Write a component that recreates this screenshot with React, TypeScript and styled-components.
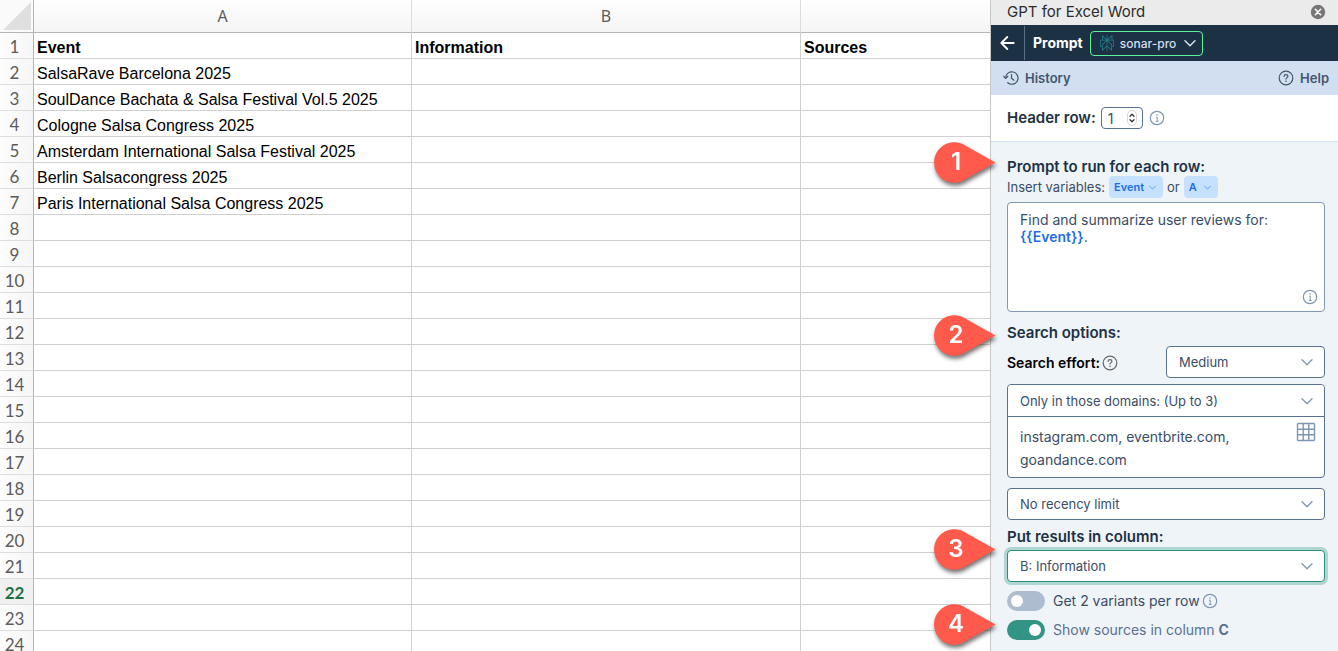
import React from 'react';
import styled, { createGlobalStyle } from 'styled-components';

const GlobalStyle = createGlobalStyle`
  * { box-sizing: border-box; }
  body { margin: 0; background: #fff; }
  button, input, select, textarea { font-family: inherit; margin: 0; }
`;

const ui = "Inter, 'Liberation Sans', sans-serif";

const Workspace = styled.div`
  display: grid;
  grid-template-columns: minmax(0, 1fr) 348px;
  height: 100vh;
  overflow: hidden;
`;

/* ---------- Spreadsheet ---------- */

const Sheet = styled.main`
  overflow: hidden;
  background: #fff;
`;

const Grid = styled.table`
  width: 100%;
  table-layout: fixed;
  border-collapse: separate;
  border-spacing: 0;
  font: 16px/20px 'Liberation Sans', Arial, sans-serif;
  color: #000;
`;

const Col = styled.col<{ $width?: number }>`
  width: ${(p) => (p.$width ? `${p.$width}px` : 'auto')};
`;

const ColumnHead = styled.th`
  height: 33px;
  padding: 0;
  border-right: 1px solid #dcdcdc;
  border-bottom: 1px solid #b5b5b5;
  background: linear-gradient(#fefefe, #f5f5f5);
  font: 400 16px/24px 'Noto Sans', sans-serif;
  color: #5c5c5c;
  &:last-child { border-right: 0; }
`;

const Corner = styled.td`
  height: 33px;
  padding: 0 2px 2px 0;
  border-right: 1px solid #b5b5b5;
  border-bottom: 1px solid #b5b5b5;
  background: #fafafa;
  vertical-align: bottom;
  text-align: right;
  svg { display: block; margin-left: auto; }
`;

const RowHead = styled.th<{ $active?: boolean }>`
  height: 26px;
  padding: 3px 4px 0 0;
  border-right: 1px solid #b5b5b5;
  border-bottom: 1px solid #dedede;
  background: ${(p) => (p.$active ? '#f0f0f0' : 'linear-gradient(90deg, #fdfdfd, #f6f6f6)')};
  font: ${(p) => (p.$active ? 700 : 400)} 17px/22px Lato, 'Noto Sans', sans-serif;
  color: ${(p) => (p.$active ? '#1e7145' : '#5c5c5c')};
  text-align: center;
`;

const Cell = styled.td<{ $bold?: boolean }>`
  height: 26px;
  padding: 5px 3px 0;
  border-right: 1px solid #d0d0d0;
  border-bottom: 1px solid #d0d0d0;
  font-weight: ${(p) => (p.$bold ? 700 : 400)};
  white-space: nowrap;
  &:last-child { border-right: 0; }
`;

/* ---------- Side panel ---------- */

const Panel = styled.aside`
  position: relative;
  display: flex;
  flex-direction: column;
  border-left: 1px solid #c8c8c8;
  background: #eff4f9;
  font: 14px/20px ${ui};
  color: #3a4d66;
`;

const TitleBar = styled.header`
  display: flex;
  align-items: center;
  justify-content: space-between;
  height: 25px;
  padding: 0 12px 1px 16px;
  background: #ebebeb;
  font-size: 15px;
  color: #2b2b2b;
`;

const IconButton = styled.button`
  display: flex;
  align-items: center;
  justify-content: center;
  padding: 0;
  border: 0;
  background: none;
  color: inherit;
`;

const NavBar = styled.nav`
  display: flex;
  align-items: center;
  height: 36px;
  background: #1d3144;
  color: #fff;
`;

const BackButton = styled(IconButton)`
  width: 34px;
  height: 34px;
  border-right: 1px solid #5a7088;
`;

const NavTitle = styled.h1`
  margin: 0 7px 0 8px;
  font-size: 14px;
  line-height: 20px;
  font-weight: 700;
`;

const ModelButton = styled.button`
  display: flex;
  align-items: center;
  gap: 5px;
  height: 25px;
  padding: 0 6px 0 8px;
  border: 1px solid #5cf29a;
  border-radius: 4px;
  background: transparent;
  font-size: 12px;
  font-weight: 500;
  color: #d3dff0;
  svg:last-child { margin-left: 3px; }
`;

const ToolBar = styled.div`
  display: flex;
  align-items: center;
  justify-content: space-between;
  height: 34px;
  padding: 0 9px 0 12px;
  background: #d2dff0;
`;

const ToolLink = styled.a`
  display: flex;
  align-items: center;
  gap: 6px;
  font-size: 13px;
  font-weight: 600;
  color: #42566e;
  text-decoration: none;
`;

const HeaderRowBar = styled.div`
  display: flex;
  align-items: center;
  height: 47px;
  padding: 0 16px;
  border-bottom: 1px solid #d2dff0;
  background: #fff;
`;

const Label = styled.label`
  font-size: 15px;
  line-height: 20px;
  font-weight: 600;
  color: #1d3144;
`;

const NumberField = styled.span`
  display: flex;
  align-items: center;
  justify-content: space-between;
  width: 42px;
  height: 22px;
  margin: 0 6px 0 5px;
  padding: 0 5px 0 6px;
  border: 1px solid #5a7190;
  border-radius: 4px;
  background: #fff;
`;

const NumberInput = styled.input`
  width: 16px;
  padding: 0;
  border: 0;
  outline: 0;
  background: none;
  font-size: 14px;
  color: #3a4d66;
  appearance: textfield;
  &::-webkit-inner-spin-button { appearance: none; }
`;

const Form = styled.form`
  display: flex;
  flex-direction: column;
  padding: 14px 13px 0 16px;
`;

const Heading = styled.h2`
  margin: 0;
  font-size: 15px;
  line-height: 22px;
  font-weight: 600;
  color: #1d3144;
`;

const Group = styled.section<{ $top: number; $gap: number }>`
  display: flex;
  flex-direction: column;
  gap: ${(p) => p.$gap}px;
  margin-top: ${(p) => p.$top}px;
`;

const VariablesRow = styled.div`
  display: flex;
  align-items: center;
  gap: 4px;
  height: 18px;
  margin-bottom: 6px;
  font-size: 13px;
`;

const Tag = styled.button`
  display: flex;
  align-items: center;
  justify-content: space-between;
  gap: 5px;
  min-width: 34px;
  height: 22px;
  padding: 0 7px 0 5px;
  border: 0;
  border-radius: 4px;
  background: #c5e1fe;
  font-size: 11px;
  font-weight: 600;
  color: #1f6fe0;
`;

const Editor = styled.div`
  display: flex;
  height: 110px;
  padding: 8px 6px 6px 12px;
  border: 1px solid #8298b3;
  border-radius: 4px;
  background: #fff;
  line-height: 17px;
`;

const EditorText = styled.div`
  flex: 1;
  outline: 0;
`;

const Variable = styled.span`
  font-weight: 600;
  color: #1f6fe0;
`;

const EditorInfo = styled.span`
  align-self: flex-end;
  display: flex;
`;

const EffortRow = styled.div`
  display: flex;
  align-items: center;
  justify-content: space-between;
`;

const EffortLabel = styled.label`
  display: flex;
  align-items: center;
  gap: 2px;
  padding-top: 2px;
  font-weight: 600;
  color: #000;
`;

const SelectBox = styled.span<{ $focus?: boolean; $joined?: boolean; $width?: string }>`
  display: grid;
  align-items: center;
  width: ${(p) => p.$width || '100%'};
  height: ${(p) => (p.$joined ? 31 : 32)}px;
  border: ${(p) => (p.$joined ? '0' : `1px solid ${p.$focus ? '#2c8f7b' : '#5a7190'}`)};
  border-radius: 4px;
  background: #fff;
  box-shadow: ${(p) => (p.$focus ? '0 0 0 3px #b0d6d3' : 'none')};
  > * { grid-area: 1 / 1; }
  > svg { justify-self: end; margin-right: 11px; pointer-events: none; }
`;

const Select = styled.select`
  width: 100%;
  height: 30px;
  padding: 0 30px 0 12px;
  border: 0;
  outline: 0;
  background: none;
  appearance: none;
  font-size: 13px;
  color: #3a4d66;
`;

const DomainBox = styled.div`
  border: 1px solid #5a7190;
  border-radius: 4px;
  background: #fff;
`;

const DomainRow = styled.div`
  display: flex;
  align-items: flex-start;
  height: 61px;
  padding: 5px 8px 0 12px;
  border-top: 1px solid #5a7190;
`;

const DomainInput = styled.textarea`
  flex: 1;
  min-width: 0;
  height: 52px;
  padding: 3px 0 0;
  border: 0;
  outline: 0;
  resize: none;
  overflow: hidden;
  background: none;
  font: 14px/23px ${ui};
  color: #3a4d66;
`;

const SwitchRow = styled.div<{ $muted?: boolean }>`
  display: flex;
  align-items: center;
  gap: 2px;
  height: 20px;
  color: ${(p) => (p.$muted ? '#5a7190' : '#3a4d66')};
`;

const SwitchInput = styled.input`
  appearance: none;
  display: flex;
  width: 38px;
  height: 20px;
  margin: 0 6px 0 0;
  padding: 4px;
  border-radius: 10px;
  background: #adbdcf;
  &::before {
    content: '';
    width: 12px;
    height: 12px;
    border-radius: 50%;
    background: #fff;
  }
  &:checked { justify-content: flex-end; background: #319484; }
`;

/* Numbered marker that points at a part of the panel */
const Marker = styled.div<{ $top: number }>`
  position: absolute;
  top: ${(p) => p.$top}px;
  left: -58px;
  width: 64px;
  height: 44px;
  filter: drop-shadow(1px 3px 2px rgba(0, 0, 0, 0.55));
  svg { display: block; }
  span {
    position: absolute;
    top: 7px;
    left: 9px;
    width: 28px;
    text-align: center;
    font-size: 24px;
    line-height: 28px;
    font-weight: 600;
    color: #fff;
  }
`;

const Callout = ({ n, top }: { n: number; top: number }) => (
  <Marker $top={top}>
    <svg width="64" height="44" viewBox="0 0 64 44">
      <path d="M62.500 21.500 33.500 5.200A20.300 20.300 0 1 0 33.500 37.800Z" fill="#ff5a4c" />
    </svg>
    <span>{n}</span>
  </Marker>
);

const Chevron = ({ size = 12, color = '#7f96b3', width = 1.3 }) => (
  <svg width={size} height={size} viewBox="0 0 12 12" fill="none" stroke={color} strokeWidth={width} strokeLinecap="round" strokeLinejoin="round">
    <path d="M1 3.700 6 8.700 11 3.700" />
  </svg>
);

const InfoIcon = ({ color = '#7f96b3' }) => (
  <svg width="16" height="16" viewBox="0 0 16 16" fill="none" stroke={color} strokeWidth="1.200">
    <circle cx="8" cy="8" r="6.700" />
    <path d="M7 7.200h1.200v4.200M6.800 11.400h2.800" strokeWidth="1" />
    <circle cx="8" cy="5" r=".8" fill={color} stroke="none" />
  </svg>
);

const HelpIcon = ({ color }: { color: string }) => (
  <svg width="16" height="16" viewBox="0 0 16 16" fill="none" stroke={color} strokeWidth="1.200" strokeLinecap="round">
    <circle cx="8" cy="8" r="6.800" />
    <path d="M6.100 6.400C6.100 5.200 7 4.600 8 4.600s1.900.7 1.900 1.700C9.900 7.600 8 7.700 8 9.100" />
    <circle cx="8" cy="11.300" r=".8" fill={color} stroke="none" />
  </svg>
);

const HistoryIcon = () => (
  <svg width="16" height="16" viewBox="0 0 16 16" fill="none" stroke="#42566e" strokeWidth="1.200" strokeLinecap="round" strokeLinejoin="round">
    <path d="M2.600 8A6.200 6.200 0 1 1 4.700 12.700" />
    <path d="M.7 6.300 2.600 8.300 4.700 6.500" />
    <path d="M8.500 4.500V8.200L10.900 10.200" />
  </svg>
);

const BackIcon = () => (
  <svg width="16" height="16" viewBox="0 0 16 16" fill="none" stroke="#fff" strokeWidth="1.800" strokeLinecap="round" strokeLinejoin="round">
    <path d="M13.700 8H1.300M7.300 2 1.300 8l6 6" />
  </svg>
);

const CloseIcon = () => (
  <svg width="16" height="16" viewBox="0 0 16 16">
    <circle cx="8" cy="8" r="7.200" fill="#767676" />
    <path d="m5.300 5.300 5.400 5.400m0-5.400-5.400 5.400" stroke="#fff" strokeWidth="1.500" strokeLinecap="round" />
  </svg>
);

const ModelIcon = () => (
  <svg width="16" height="16" viewBox="0 0 24 24" fill="#20808d">
    <path d="M22.398 7.090h-2.311V.068l-7.509 6.354V.158h-1.156v6.196L4.490 0v7.090H1.602v10.397H4.490V24l6.932-6.359v6.200h1.156v-6.047l6.932 6.181v-6.488h2.888V7.090zm-3.466-4.531v4.531h-5.355l5.355-4.531zm-13.286.067 4.869 4.464H5.646V2.626zM2.758 16.332V8.245h7.847L4.490 14.360v1.972H2.758zm2.888 5.040v-6.534l5.776-5.776v7.011l-5.776 5.299zm12.708.025-5.776-5.151V9.062l5.776 5.776v6.559zm2.889-5.065H19.510v-1.972l-6.115-6.115h7.848v8.087z" />
  </svg>
);

const StepperIcon = () => (
  <svg width="10" height="16" viewBox="0 0 10 16" fill="none" stroke="#333" strokeWidth="1.300" strokeLinecap="round" strokeLinejoin="round">
    <rect x=".5" y=".5" width="9" height="15" rx="4.500" fill="#fff" stroke="#d8d8d8" strokeWidth="1" />
    <path d="M3 6.200 5 4.200l2 2M3 9.800l2 2 2-2" />
  </svg>
);

const GridIcon = () => (
  <svg width="20" height="20" viewBox="0 0 20 20" fill="none" stroke="#7f96b3" strokeWidth="1.400">
    <rect x="1.500" y="1.500" width="17" height="17" rx="1" />
    <path d="M7.200 1.500v17M12.800 1.500v17M1.500 7.200h17M1.500 12.800h17" />
  </svg>
);

const events = [
  'SalsaRave Barcelona 2025',
  'SoulDance Bachata & Salsa Festival Vol.5 2025',
  'Cologne Salsa Congress 2025',
  'Amsterdam International Salsa Festival 2025',
  'Berlin Salsacongress 2025',
  'Paris International Salsa Congress 2025',
];

const rows: string[][] = [
  ['Event', 'Information', 'Sources'],
  ...events.map((e) => [e, '', '']),
  ...Array.from({ length: 17 }, () => ['', '', '']),
];

const ACTIVE_ROW = 22;

export default function App() {
  return (
    <Workspace>
      <GlobalStyle />
      <Sheet>
        <Grid>
          <colgroup>
            <Col $width={34} />
            <Col $width={378} />
            <Col $width={389} />
            <Col />
          </colgroup>
          <thead>
            <tr>
              <Corner>
                <svg width="28" height="28" viewBox="0 0 28 28">
                  <path d="M28 0V28H0Z" fill="#dfdfdf" />
                </svg>
              </Corner>
              <ColumnHead scope="col">A</ColumnHead>
              <ColumnHead scope="col">B</ColumnHead>
              <ColumnHead scope="col" />
            </tr>
          </thead>
          <tbody>
            {rows.map((cells, i) => (
              <tr key={i}>
                <RowHead scope="row" $active={i + 1 === ACTIVE_ROW}>{i + 1}</RowHead>
                {cells.map((text, c) => (
                  <Cell key={c} $bold={i === 0}>{text}</Cell>
                ))}
              </tr>
            ))}
          </tbody>
        </Grid>
      </Sheet>

      <Panel>
        <TitleBar>
          <span>GPT for Excel Word</span>
          <IconButton type="button" aria-label="Close"><CloseIcon /></IconButton>
        </TitleBar>
        <NavBar>
          <BackButton type="button" aria-label="Back"><BackIcon /></BackButton>
          <NavTitle>Prompt</NavTitle>
          <ModelButton type="button">
            <ModelIcon />
            sonar-pro
            <Chevron color="#d3dff0" width={1.5} />
          </ModelButton>
        </NavBar>
        <ToolBar>
          <ToolLink href="#history"><HistoryIcon />History</ToolLink>
          <ToolLink href="#help"><HelpIcon color="#42566e" />Help</ToolLink>
        </ToolBar>
        <HeaderRowBar>
          <Label htmlFor="header-row">Header row:</Label>
          <NumberField>
            <NumberInput id="header-row" type="number" defaultValue={1} />
            <StepperIcon />
          </NumberField>
          <InfoIcon />
        </HeaderRowBar>

        <Form>
          <Heading id="prompt-label">Prompt to run for each row:</Heading>
          <VariablesRow>
            <span>Insert variables:</span>
            <Tag type="button">Event <Chevron size={7} color="#3f8cf0" /></Tag>
            <span>or</span>
            <Tag type="button">A <Chevron size={7} color="#3f8cf0" /></Tag>
          </VariablesRow>
          <Editor>
            <EditorText role="textbox" aria-multiline="true" aria-labelledby="prompt-label" contentEditable suppressContentEditableWarning>
              Find and summarize user reviews for:<br />
              <Variable>{'{{Event}}'}</Variable>.
            </EditorText>
            <EditorInfo><InfoIcon /></EditorInfo>
          </Editor>

          <Group $top={10} $gap={2}>
            <Heading>Search options:</Heading>
            <EffortRow>
              <EffortLabel htmlFor="effort">Search effort: <HelpIcon color="#666" /></EffortLabel>
              <SelectBox $width="50%">
                <Select id="effort"><option>Medium</option></Select>
                <Chevron />
              </SelectBox>
            </EffortRow>
          </Group>

          <Group $top={6} $gap={10}>
            <DomainBox>
              <SelectBox $joined>
                <Select aria-label="Domain filter"><option>Only in those domains: (Up to 3)</option></Select>
                <Chevron />
              </SelectBox>
              <DomainRow>
                <DomainInput aria-label="Domains" defaultValue={'instagram.com, eventbrite.com,\ngoandance.com'} />
                <IconButton type="button" aria-label="Pick from sheet"><GridIcon /></IconButton>
              </DomainRow>
            </DomainBox>
            <SelectBox>
              <Select aria-label="Recency"><option>No recency limit</option></Select>
              <Chevron />
            </SelectBox>
          </Group>

          <Group $top={7} $gap={3}>
            <Label htmlFor="result-column">Put results in column:</Label>
            <SelectBox $focus>
              <Select id="result-column"><option>B: Information</option></Select>
              <Chevron />
            </SelectBox>
          </Group>

          <Group $top={9} $gap={9}>
            <SwitchRow>
              <SwitchInput id="variants" type="checkbox" role="switch" />
              <label htmlFor="variants">Get 2 variants per row</label>
              <InfoIcon />
            </SwitchRow>
            <SwitchRow $muted>
              <SwitchInput id="sources" type="checkbox" role="switch" defaultChecked />
              <label htmlFor="sources">Show sources in column <b>C</b></label>
            </SwitchRow>
          </Group>
        </Form>

        <Callout n={1} top={141} />
        <Callout n={2} top={314} />
        <Callout n={3} top={528} />
        <Callout n={4} top={603} />
      </Panel>
    </Workspace>
  );
}
